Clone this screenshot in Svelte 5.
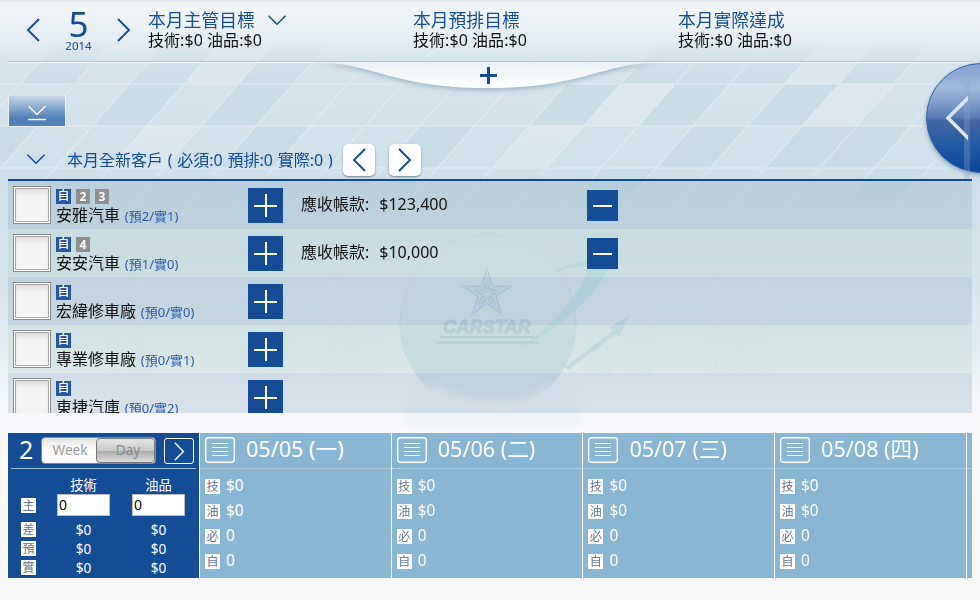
<script>
  const goals = [
    { title: '本月主管目標', menu: true },
    { title: '本月預排目標' },
    { title: '本月實際達成' },
  ];
  const customers = [
    { name: '安雅汽車', tags: ['2', '3'], count: '(預2/實1)', due: '$123,400' },
    { name: '安安汽車', tags: ['4'], count: '(預1/實0)', due: '$10,000' },
    { name: '宏緯修車廠', tags: [], count: '(預0/實0)' },
    { name: '專業修車廠', tags: [], count: '(預0/實1)' },
    { name: '東捷汽庫', tags: [], count: '(預0/實2)' },
  ];
  const days = ['05/05 (一)', '05/06 (二)', '05/07 (三)', '05/08 (四)'];
  const dayRows = [['技', '$0'], ['油', '$0'], ['必', '0'], ['自', '0']];
  const weekRows = ['差', '預', '實'];

  // Skewed tiles behind the page: [column, top, bottom, fill]
  const dark = '#bfd7e3';
  const light = '#e3eef4';
  const edge = (n, y) => 20 + 54.6 * n - (y - 84) * 0.88;
  const tiles = [
    [0, 42, 84, dark], [2, 42, 84, dark], [4, 42, 84, dark], [3, 42, 84, light],
    [11, 42, 84, dark], [12, 42, 84, dark], [13, 42, 84, dark], [14, 42, 84, light], [15, 42, 84, dark],
    [2, 84, 126, dark], [4, 84, 126, dark], [10, 84, 126, dark], [11, 84, 126, light],
    [12, 84, 126, dark], [14, 84, 126, dark], [15, 84, 126, light],
    [0, 126, 168, dark], [3, 126, 168, light], [5, 126, 168, dark], [8, 126, 168, dark], [10, 126, 168, light],
    [13, 126, 168, dark], [15, 126, 168, dark], [16, 126, 168, dark], [12, 168, 210, dark], [17, 168, 210, dark],
  ];
  const points = ([n, a, b]) =>
    `${edge(n, a)},${a} ${edge(n + 1, a)},${a} ${edge(n + 1, b)},${b} ${edge(n, b)},${b}`;
  const lines = Array.from({ length: 22 }, (_, i) => i - 1);
  const star = Array.from({ length: 10 }, (_, i) => {
    const r = i % 2 ? 9.5 : 25;
    const a = (i * Math.PI) / 5;
    return [487 + r * Math.sin(a), 294 - r * Math.cos(a)];
  });
</script>

{#snippet left(w, h, s)}
  <svg width={w} height={h} viewBox="0 0 14 24"><path d="M13 1L2 12L13 23" fill="none" stroke="currentColor" stroke-width={s} /></svg>
{/snippet}
{#snippet right(w, h, s)}
  <svg width={w} height={h} viewBox="0 0 14 24"><path d="M1 1L12 12L1 23" fill="none" stroke="currentColor" stroke-width={s} /></svg>
{/snippet}
{#snippet down()}
  <svg width="18" height="11" viewBox="0 0 18 11"><path d="M.5 .8L9 9.3L17.5 .8" fill="none" stroke="currentColor" stroke-width="1.5" /></svg>
{/snippet}

<div class="page">
  <svg class="backdrop" width="980" height="600" viewBox="0 0 980 600" aria-hidden="true">
    <defs>
      <linearGradient id="sky" x1="0" y1="0" x2="0" y2="1">
        <stop offset="0" stop-color="#edf3f7" /><stop offset=".1" stop-color="#d6e4ec" />
        <stop offset=".3" stop-color="#cde0e9" /><stop offset=".46" stop-color="#d5e5ed" />
        <stop offset=".58" stop-color="#e2edf2" /><stop offset=".66" stop-color="#f3f6f9" />
        <stop offset=".72" stop-color="#fafafc" /><stop offset="1" stop-color="#f6f6f6" />
      </linearGradient>
      <linearGradient id="fade" x1="0" y1="0" x2="0" y2="1">
        <stop offset="0" stop-color="#fff" stop-opacity="0" /><stop offset=".25" stop-color="#fff" />
        <stop offset=".6" stop-color="#fff" /><stop offset=".85" stop-color="#fff" stop-opacity="0" />
      </linearGradient>
      <mask id="tileMask"><rect y="30" width="980" height="220" fill="url(#fade)" /></mask>
      <linearGradient id="globe" x1="0" y1="0" x2="0" y2="1">
        <stop offset="0" stop-color="#d4e7ed" stop-opacity=".3" /><stop offset=".6" stop-color="#cfe2ea" />
        <stop offset="1" stop-color="#d6e5ed" />
      </linearGradient>
      <filter id="soft"><feGaussianBlur stdDeviation="4" /></filter>
      <filter id="haze"><feGaussianBlur stdDeviation="2" /></filter>
    </defs>
    <rect width="980" height="600" fill="url(#sky)" />
    <g mask="url(#tileMask)">
      {#each tiles as t}<polygon points={points(t)} fill={t[3]} opacity=".5" />{/each}
      <g stroke="#e4eff4" stroke-width="1.3" opacity=".6">
        {#each lines as n}<line x1={edge(n, 30)} y1="30" x2={edge(n, 250)} y2="250" />{/each}
        {#each [84, 126, 168, 210] as y}<line x1="0" y1={y} x2="980" y2={y} />{/each}
      </g>
    </g>
    <g fill="#dbe9ef" opacity=".45" filter="url(#haze)">
      {#each [330, 345, 355, 372, 590, 604, 630, 644, 712, 724, 737, 760, 250, 262, 281, 110, 135] as x, i}
        <rect {x} y={275 + ((i * 17) % 45)} width="7" height={100 - ((i * 17) % 45)} />
      {/each}
    </g>
    <circle cx="488" cy="323" r="88" fill="url(#globe)" stroke="#bcd4e0" stroke-opacity=".5" />
    <path d="M555 270Q590 256 612 260Q604 290 548 333L520 348Q580 303 588 267Q570 266 557 272Z" fill="#afd8e5" opacity=".5" />
    <path d="M565 367L613 331L609 327L629 316L619 337L616 334L568 370Z" fill="#a9cedf" opacity=".45" />
    <path d="M405 392Q425 380 446 390Q470 402 490 399Q520 404 536 392Q560 380 580 390L580 425L405 425Z" fill="#edf3f7" filter="url(#soft)" />
    <g opacity=".36">
      <polygon points={star.map((p) => p.join()).join(' ')} fill="#88abc8" stroke="#88abc8" stroke-width="1.5" />
      <polygon points={star.map(([x, y]) => `${487 + (x - 487) * 0.78},${294 + (y - 294) * 0.78}`).join(' ')} fill="none" stroke="#dce9f0" />
      <g stroke="#c9dce7" stroke-width="1">
        {#each star as p}<line x1="487" y1="294" x2={p[0]} y2={p[1]} />{/each}
      </g>
      <text x="487" y="333" text-anchor="middle" textLength="88" lengthAdjust="spacingAndGlyphs" class="mark">CARSTAR</text>
      <path d="M440 337H535M436 342.5H539" stroke="#86a9c5" stroke-width="2" />
    </g>
  </svg>

  <header>
    <div class="month">
      <button class="plain" aria-label="prev">{@render left(14, 24, 1.9)}</button>
      <div class="date"><b>5</b><span>2014</span></div>
      <button class="plain" aria-label="next">{@render right(14, 24, 1.9)}</button>
    </div>
    {#each goals as g}
      <div class="goal">
        <div class="title">{g.title}{#if g.menu}<i>{@render down()}</i>{/if}</div>
        <div class="sum">技術:$0 油品:$0</div>
      </div>
    {/each}
    <svg class="notch" width="348" height="36" viewBox="0 0 348 36">
      <defs>
        <linearGradient id="lip" x1="0" y1="0" x2="0" y2="1"><stop offset="0" stop-color="#e9f0f5" /><stop offset="1" stop-color="#fff" /></linearGradient>
        <filter id="lipShadow" x="-5%" y="-20%" width="110%" height="160%"><feDropShadow dx="0" dy="2" stdDeviation="2.5" flood-color="#7fa0b4" flood-opacity=".7" /></filter>
      </defs>
      <path d="M0 0C62 1 78 26 174 26C270 26 286 1 348 0Z" fill="url(#lip)" filter="url(#lipShadow)" />
      <path d="M166 13.5H183M174.5 5V22" stroke="#144c96" stroke-width="3" />
    </svg>
  </header>

  <div class="toolbar">
    <button class="tab" aria-label="expand">
      <svg width="20" height="16" viewBox="0 0 20 16"><path d="M1.5 1L10 9.5L18.5 1M1 14.5H19" fill="none" stroke="#fff" stroke-width="1.3" /></svg>
    </button>
  </div>

  <div class="section">
    <i>{@render down()}</i>
    <span>本月全新客戶 ( 必須:0 預排:0 實際:0 )</span>
    <button class="nav" aria-label="previous page">{@render left(14, 24, 1.9)}</button>
    <button class="nav" aria-label="next page">{@render right(14, 24, 1.9)}</button>
  </div>

  <div class="list">
    {#each customers as c}
      <div class="row">
        <div class="check"></div>
        <div class="who">
          <div class="tags"><em>自</em>{#each c.tags as t}<b>{t}</b>{/each}</div>
          <div class="name">{c.name} <small>{c.count}</small></div>
        </div>
        <button class="add" aria-label="add"><svg width="23" height="23" viewBox="0 0 23 23"><path d="M0 12H23M12 0V23" stroke="#fff" stroke-width="2" /></svg></button>
        {#if c.due}
          <div class="due"><span>應收帳款:</span>{c.due}</div>
          <button class="less" aria-label="remove"><svg width="19" height="2"><rect width="19" height="2" fill="#fff" /></svg></button>
        {/if}
      </div>
    {/each}
  </div>

  <div class="planner">
    <div class="week">
      <div class="weekhead">
        <strong>2</strong>
        <div class="switch"><span>Week</span><span class="on">Day</span></div>
        <button class="go" aria-label="next week">{@render right(11, 19, 1.8)}</button>
      </div>
      <div class="grid titles"><span></span><span>技術</span><span>油品</span></div>
      <div class="grid inputs"><em>主</em><input value="0" /><input value="0" /></div>
      {#each weekRows as r}
        <div class="grid values"><em>{r}</em><span>$0</span><span>$0</span></div>
      {/each}
    </div>
    {#each days as d}
      <div class="day">
        <div class="dayhead">
          <svg width="30" height="26" viewBox="0 0 30 26"><rect x=".75" y=".75" width="28.5" height="24.5" rx="2.5" fill="none" stroke="#fff" stroke-width="1.3" /><path d="M7 6.5H23M7 10.5H23M7 14.5H23M7 18.5H23" stroke="#fff" /></svg>
          <span>{d}</span>
        </div>
        {#each dayRows as [k, v]}
          <div class="stat"><em>{k}</em><span>{v}</span></div>
        {/each}
      </div>
    {/each}
    <div class="day rest"><div class="dayhead"></div></div>
  </div>

  <svg class="orb" width="60" height="122" viewBox="0 0 60 122">
    <defs>
      <linearGradient id="ball" x1="0" y1="0" x2="0" y2="1">
        <stop offset="0" stop-color="#819fd0" /><stop offset=".22" stop-color="#a3b9dc" /><stop offset=".49" stop-color="#5b80b7" />
        <stop offset=".52" stop-color="#4567a4" /><stop offset=".75" stop-color="#2459a4" /><stop offset="1" stop-color="#08469a" />
      </linearGradient>
      <filter id="orbShadow"><feDropShadow dx="0" dy="2" stdDeviation="2" flood-color="#5d7990" flood-opacity=".6" /></filter>
      <clipPath id="tip"><rect width="48" height="122" /></clipPath>
    </defs>
    <circle cx="61" cy="58" r="54.5" fill="url(#ball)" stroke="#3264aa" filter="url(#orbShadow)" />
    <rect x="44" y="22" width="6" height="97" fill="#8ca8cf" opacity=".3" />
    <path d="M50 36L28 58L50 80" clip-path="url(#tip)" fill="none" stroke="#dce4f2" stroke-width="3.5" />
  </svg>
</div>

<style>
  :global(body) { margin: 0; background: #f7f7f7; }
  .page {
    position: relative; width: 980px; height: 600px; overflow: hidden; isolation: isolate;
    font-family: "Noto Sans", "Noto Sans CJK TC", sans-serif; font-size: 16px; color: #111;
    display: flex; flex-direction: column;
  }
  .page * { box-sizing: border-box; }
  button { padding: 0; border: 0; background: none; font: inherit; color: inherit; display: flex; align-items: center; justify-content: center; }
  svg { display: block; flex: none; }
  i, em { font-style: normal; }
  .backdrop { position: absolute; inset: 0; z-index: -1; }
  .mark { font: italic 900 19px "Liberation Sans", sans-serif; fill: #8fb0c9; stroke: #7fa3c1; stroke-width: 1; }

  header {
    position: relative; height: 62px; margin: 0 8px; flex: none; display: flex; color: #144c96;
    border-bottom: 1px solid #b3c5d0; box-shadow: 0 1px #eef4f7;
  }
  header::before { content: ""; position: absolute; inset: 0 -8px; z-index: -1; border-top: 2px solid #e6ebee; background: linear-gradient(#f2f5f8, #ebf1f5bb 50%, #dce9f000); }
  .month { width: 140px; display: flex; padding: 0 17px 0 18px; justify-content: space-between; align-items: flex-start; }
  .plain { margin-top: 18px; }
  .date { display: flex; flex-direction: column; align-items: center; }
  .date b { font-weight: 400; font-size: 35px; line-height: 32px; height: 32px; margin-top: 8px; }
  .date span { font-size: 11.5px; line-height: 12px; }
  .goal { width: 265px; padding-top: 9px; }
  .title { display: flex; gap: 13px; font-size: 17.8px; line-height: 22px; }
  .title i { padding-top: 6px; }
  .sum { color: #111; line-height: 20px; margin-top: -1px; letter-spacing: .05px; }
  .notch { position: absolute; left: 306px; top: 62px; }

  .toolbar { height: 65px; flex: none; padding: 34px 8px 0; }
  .tab { width: 58px; height: 31px; padding-top: 4px; border: 1px solid #eaf2f6; border-top: 0; background: linear-gradient(#c5d8e7 0, #7fa1ca 45%, #4e7eb5 75%, #5583b8); }

  .section { height: 54px; flex: none; margin: 0 8px; padding: 13px 0 0 19px; display: flex; align-items: center; color: #144c96; border-bottom: 2px solid #144c96; }
  .section i { width: 40px; }
  .section span { width: 276px; white-space: pre; word-spacing: .6px; margin-top: -2px; }
  .nav { width: 32px; height: 32px; margin-right: 14px; background: #fff; border-radius: 5px; box-shadow: 0 1px 2px #6e8796; }

  .list { height: 232px; flex: none; margin: 0 8px; overflow: hidden; }
  .row { height: 48px; display: flex; align-items: flex-start; padding: 5px 0 0 5px; background: rgba(128, 160, 185, .25); }
  .row:nth-child(even) { background: rgba(178, 210, 200, .3); }
  .check { width: 38px; height: 38px; border: 1px solid #8e8e8e; background: #f3f3f3; box-shadow: inset 0 0 0 1px #fff, inset 0 0 0 2px #aaa, inset 0 4px 5px #d5d5d5; }
  .who { width: 187px; margin: 0 5px; padding-top: 3px; white-space: nowrap; }
  .tags { display: flex; gap: 5px; height: 15px; }
  .tags em, .tags b { width: 15px; height: 15px; font-size: 12px; line-height: 15px; text-align: center; color: #fff; }
  .tags em { background: #2756a2; font-weight: 500; font-size: 12px; line-height: 14px; }
  .tags b { width: 14px; background: #8f8f8f; }
  .name { line-height: 23px; }
  .name small { font-size: 13px; margin-left: .7px; color: #2c5ba8; }
  .add { width: 35px; height: 35px; margin-top: 2px; background: #144c96; }
  .due { width: 304px; padding-left: 18px; line-height: 37px; height: 37px; }
  .due span { margin-right: 10px; }
  .less { width: 31px; height: 31px; margin-top: 4px; background: #144c96; }

  .planner { height: 145px; margin: 20px 8px 0; display: flex; color: #fff; background: #89b6d3; overflow: hidden; flex: none; }
  .week { width: 191px; flex: none; background: #144c96; }
  .weekhead { height: 36px; margin: 0 3px; border-bottom: 1px solid #a4c3df; display: flex; padding: 4px 0 0 8px; }
  strong { width: 22px; font-size: 25px; font-weight: 400; line-height: 25px; }
  .switch { width: 115px; height: 27px; display: flex; border-radius: 4px; overflow: hidden; border: 1px solid #888; font-size: 13.6px; line-height: 24px; text-align: center; color: #999; background: linear-gradient(#e2e2e2, #fff 50%, #fbfbfb); }
  .switch span { flex: 1; padding-left: 2px; }
  .switch .on { flex: 0 0 59px; padding-left: 5px; border: 1px solid #777; border-radius: 4px; line-height: 22px; color: #8a8a8a; background: linear-gradient(#e6e6e6, #cacaca 50%, #a8a8a8 51%, #dedede); }
  .go { width: 30px; height: 26px; margin: 1px 0 0 8px; border: 1px solid #fff; border-radius: 3px; }
  .grid { display: grid; grid-template-columns: 28px 75px 75px; padding-left: 13px; font-size: 13.6px; line-height: 19px; align-items: center; }
  .grid > :not(em) { text-align: center; }
  .titles { height: 22px; padding-top: 7px; }
  .titles, .values { grid-template-columns: 25px 75px 75px; }
  .inputs { height: 29px; }
  .values { height: 19px; }
  .grid em, .stat em { width: 15px; height: 15px; background: #fff; color: #66788f; font-size: 12px; line-height: 15px; text-align: center; }
  .inputs input { width: 53px; height: 22px; margin: -2px 0 0 8px; padding: 1px; border: 1px solid #bbb; background: #fff; font: inherit; font-size: 14px; color: #000; }
  .grid.inputs > input { text-align: left; }
  .grid.inputs em { margin-top: -1px; }
  .titles span { font-size: 13.3px; }
  .day { width: 191.7px; flex: none; border-left: 1px solid #fff; }
  .dayhead { height: 36px; margin-bottom: 4px; padding: 4px 0 0 5px; display: flex; border-bottom: 1px dotted #c9e0ef; }
  .dayhead span { margin-left: 11px; font-size: 21.6px; line-height: 24px; white-space: nowrap; }
  .stat { height: 25px; padding-left: 5px; display: flex; gap: 6px; align-items: center; font-size: 15.4px; }
  .stat span { margin-top: 0; }
  .stat em { margin-top: 2px; }

  .orb { position: absolute; left: 920px; top: 60px; }
</style>
